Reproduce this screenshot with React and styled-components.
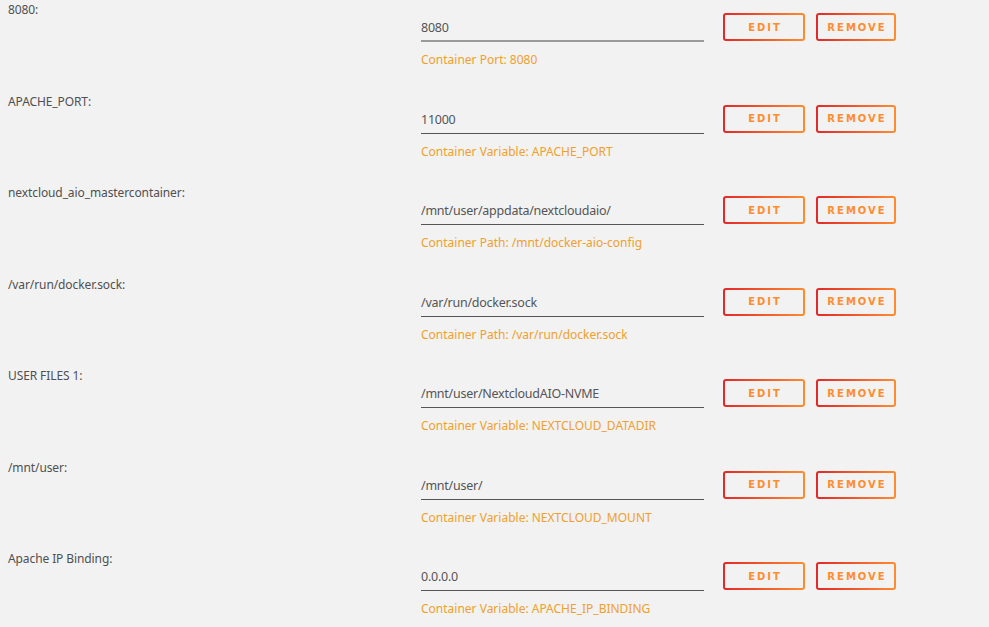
import React from 'react';
import styled, { createGlobalStyle } from 'styled-components';

const GlobalStyle = createGlobalStyle`
  html, body {
    margin: 0;
    background: #f2f2f2;
  }
  body {
    font-family: "Noto Sans", "Open Sans", sans-serif;
    color: #4f4f4f;
  }
`;

const List = styled.div`
  padding: 0 0 0 8px;
`;

const Row = styled.div`
  display: flex;
  align-items: flex-start;
  height: 91.5px;
`;

const Label = styled.div`
  width: 413px;
  flex: none;
  font-size: 12px;
  line-height: 20px;
  letter-spacing: -0.1px;
  color: #505050;
`;

const Field = styled.div`
  width: 283px;
  flex: none;
  padding-top: 18px;
`;

const Value = styled.div`
  font-size: 12.5px;
  line-height: 20px;
  letter-spacing: -0.25px;
  color: #555;
  padding-bottom: ${(p) => (p.$active ? '2px' : '3px')};
  border-bottom: ${(p) => (p.$active ? '2px solid #9a9a9a' : '1px solid #555')};
`;

const Hint = styled.div`
  margin-top: 9px;
  font-size: 12px;
  line-height: 18px;
  color: #f0a02c;
`;

const Actions = styled.div`
  display: flex;
  gap: 11px;
  margin: 13px 0 0 19px;
`;

const Button = styled.button`
  box-sizing: border-box;
  width: ${(p) => p.$w}px;
  height: 28px;
  border: 2px solid transparent;
  border-radius: 3px;
  background:
    linear-gradient(#f2f2f2, #f2f2f2) padding-box,
    linear-gradient(90deg, #e22828, #ff8c2f) border-box;
  color: #ff8c2f;
  font-family: "DejaVu Sans", "Noto Sans", sans-serif;
  font-weight: 700;
  font-size: 10px;
  letter-spacing: 2px;
  padding: 0 0 0 2px;
  cursor: pointer;
`;

const rows = [
  { label: '8080:', value: '8080', hint: 'Container Port: 8080', active: true },
  { label: 'APACHE_PORT:', value: '11000', hint: 'Container Variable: APACHE_PORT' },
  { label: 'nextcloud_aio_mastercontainer:', value: '/mnt/user/appdata/nextcloudaio/', hint: 'Container Path: /mnt/docker-aio-config' },
  { label: '/var/run/docker.sock:', value: '/var/run/docker.sock', hint: 'Container Path: /var/run/docker.sock' },
  { label: 'USER FILES 1:', value: '/mnt/user/NextcloudAIO-NVME', hint: 'Container Variable: NEXTCLOUD_DATADIR' },
  { label: '/mnt/user:', value: '/mnt/user/', hint: 'Container Variable: NEXTCLOUD_MOUNT' },
  { label: 'Apache IP Binding:', value: '0.0.0.0', hint: 'Container Variable: APACHE_IP_BINDING' },
];

const App = () => (
  <>
    <GlobalStyle />
    <List>
      {rows.map((r) => (
        <Row key={r.label}>
          <Label>{r.label}</Label>
          <Field>
            <Value $active={r.active}>{r.value}</Value>
            <Hint>{r.hint}</Hint>
          </Field>
          <Actions>
            <Button $w={82}>EDIT</Button>
            <Button $w={80}>REMOVE</Button>
          </Actions>
        </Row>
      ))}
    </List>
  </>
);

export default App;
